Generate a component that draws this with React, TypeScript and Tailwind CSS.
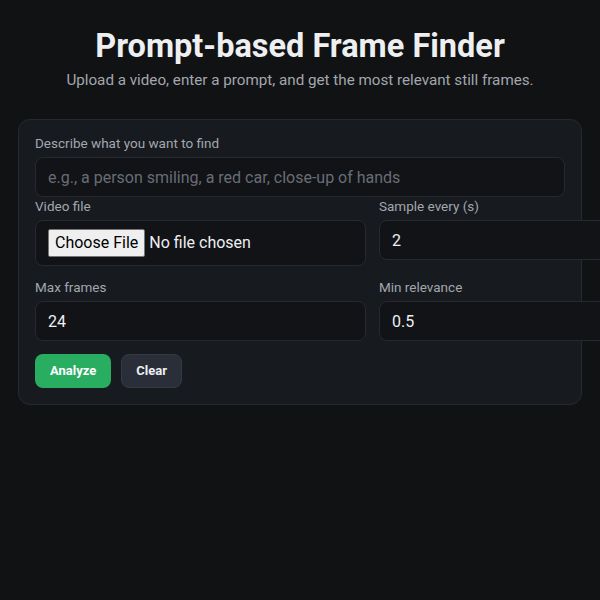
export default function App() {
  return (
    <div className="min-h-screen w-full overflow-hidden bg-[#111214] font-['Roboto','Liberation_Sans',sans-serif] text-[#e6e7ea]">
      <main className="px-[18px] pt-[27px] pb-10">
        <h1 className="text-center text-[32.5px] font-bold leading-[39px] text-[#eeeff1]">
          Prompt-based Frame Finder
        </h1>
        <p className="mt-[3px] text-center text-[15.2px] leading-[22px] text-[#a3a7ae]">
          Upload a video, enter a prompt, and get the most relevant still frames.
        </p>

        <form className="mt-[28px] rounded-xl border border-[#262a30] bg-[#171a1e] px-4 pt-[14px] pb-4">
          {/* Prompt */}
          <label className="mb-[5px] block text-[13.5px] leading-[18px] text-[#a3a7ae]">
            Describe what you want to find
          </label>
          <input
            type="text"
            placeholder="e.g., a person smiling, a red car, close-up of hands"
            className="block h-[40px] w-full rounded-lg border border-[#262a30] bg-[#111317] px-3 text-[16px] text-[#e6e7ea] outline-none placeholder:text-[#686d75]"
          />

          <div className="grid grid-cols-[331px_1fr] gap-x-[13px] gap-y-[12px]">
            {/* Video file */}
            <div>
              <label className="mb-[5px] block text-[13.5px] leading-[18px] text-[#a3a7ae]">
                Video file
              </label>
              <input
                type="file"
                className="block w-full rounded-lg border border-[#262a30] bg-[#111317] px-3 py-[8px] text-[16px] leading-[24px] text-[#eeeff1] file:mr-[4px] file:rounded-[2px] file:border file:border-solid file:border-[#767676] file:bg-[#efefef] file:px-[6px] file:py-[1px] file:text-[16px] file:text-black"
              />
            </div>
            <div>
              <label className="mb-[5px] block text-[13.5px] leading-[18px] text-[#a3a7ae]">
                Sample every (s)
              </label>
              <input
                type="number"
                defaultValue="2"
                className="block h-[40px] w-[250px] rounded-lg border border-[#262a30] bg-[#111317] px-3 text-[16px] text-[#eeeff1] outline-none"
              />
            </div>

            {/* Max frames */}
            <div>
              <label className="mb-[5px] block text-[13.5px] leading-[18px] text-[#a3a7ae]">
                Max frames
              </label>
              <input
                type="number"
                defaultValue="24"
                className="block h-[40px] w-full rounded-lg border border-[#262a30] bg-[#111317] px-3 text-[16px] text-[#eeeff1] outline-none"
              />
            </div>
            <div>
              <label className="mb-[5px] block text-[13.5px] leading-[18px] text-[#a3a7ae]">
                Min relevance
              </label>
              <input
                type="number"
                defaultValue="0.5"
                className="block h-[40px] w-[250px] rounded-lg border border-[#262a30] bg-[#111317] px-3 text-[16px] text-[#eeeff1] outline-none"
              />
            </div>
          </div>

          {/* Actions */}
          <div className="mt-[13px] flex gap-[10px]">
            <button
              type="button"
              className="h-[34px] rounded-lg bg-[#29ad60] px-[15px] text-[13px] font-bold text-white"
            >
              Analyze
            </button>
            <button
              type="button"
              className="h-[34px] rounded-lg border border-[#343946] bg-[#2a2e39] px-[14px] text-[13px] font-bold text-[#eeeff1]"
            >
              Clear
            </button>
          </div>
        </form>
      </main>
    </div>
  );
}
